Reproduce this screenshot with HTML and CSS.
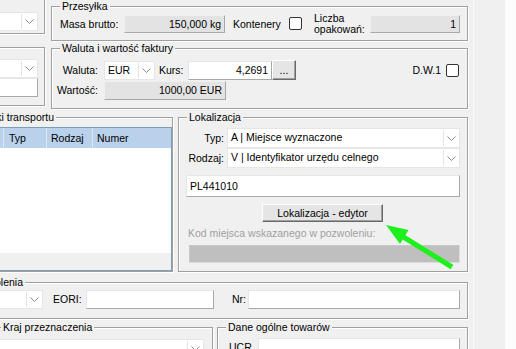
FILE: index.html
```html
<!DOCTYPE html>
<html lang="pl">
<head>
<meta charset="utf-8">
<title>Zgłoszenie</title>
<link rel="stylesheet" href="styles.css">
</head>
<body>
<div class="window">
  <div class="main">
    <div class="row1">
      <div class="lcol">
        <div class="gb box1">
          <div class="combo"><span class="ct"></span><span class="dd"><svg class="chev" width="9" height="5" viewBox="0 0 9 5"><path d="M0.5 0.5 L4.5 4.5 L8.5 0.5"/></svg></span></div>
        </div>
        <div class="gb box2">
          <div class="combo"><span class="ct"></span><span class="dd"><svg class="chev" width="9" height="5" viewBox="0 0 9 5"><path d="M0.5 0.5 L4.5 4.5 L8.5 0.5"/></svg></span></div>
          <div class="tb"></div>
        </div>
      </div>
      <div class="rcol">
        <div class="gb przes">
          <span class="lg">Przesyłka</span>
          <span class="lbl l-masa">Masa brutto:</span>
          <div class="ro f-masa">150,000 kg</div>
          <span class="lbl l-kont">Kontenery</span>
          <span class="chk"></span>
          <span class="lbl l-licz">Liczba<br>opakowań:</span>
          <div class="ro f-licz">1</div>
        </div>
        <div class="gb waluta">
          <span class="lg">Waluta i wartość faktury</span>
          <div class="wrow">
            <span class="lbl rl">Waluta:</span>
            <div class="combo c-eur"><span class="ct">EUR</span><span class="dd"><svg class="chev" width="9" height="5" viewBox="0 0 9 5"><path d="M0.5 0.5 L4.5 4.5 L8.5 0.5"/></svg></span></div>
            <span class="lbl l-kurs">Kurs:</span>
            <div class="tb num f-kurs">4,2691</div>
            <div class="btn b-dots">...</div>
            <span class="lbl l-dw">D.W.1</span>
            <span class="chk"></span>
          </div>
          <div class="wrow">
            <span class="lbl rl">Wartość:</span>
            <div class="ro f-wart">1000,00 EUR</div>
          </div>
        </div>
      </div>
    </div>

    <div class="row2">
      <div class="gb transport">
        <span class="lg lg-trans">Środki transportu</span>
        <div class="lv">
          <div class="lvh">
            <span class="hc hc0"></span>
            <span class="hc hc1">Typ</span>
            <span class="hc hc2">Rodzaj</span>
            <span class="hc hc3">Numer</span>
          </div>
          <div class="lvb"></div>
          <div class="lvf"></div>
        </div>
      </div>
      <div class="gb lok">
        <span class="lg">Lokalizacja</span>
        <div class="lrow">
          <span class="lbl ll">Typ:</span>
          <div class="combo grow"><span class="ct">A | Miejsce wyznaczone</span><span class="dd"><svg class="chev" width="9" height="5" viewBox="0 0 9 5"><path d="M0.5 0.5 L4.5 4.5 L8.5 0.5"/></svg></span></div>
        </div>
        <div class="lrow">
          <span class="lbl ll">Rodzaj:</span>
          <div class="combo grow"><span class="ct">V | Identyfikator urzędu celnego</span><span class="dd"><svg class="chev" width="9" height="5" viewBox="0 0 9 5"><path d="M0.5 0.5 L4.5 4.5 L8.5 0.5"/></svg></span></div>
        </div>
        <div class="tb f-pl">PL441010</div>
        <div class="btn b-edit">Lokalizacja - edytor</div>
        <div class="dis-lbl">Kod miejsca wskazanego w pozwoleniu:</div>
        <div class="dis-field"></div>
      </div>
    </div>

    <div class="gb row3">
      <span class="lg lg-poz">Dane pozwolenia</span>
      <div class="combo c-poz"><span class="ct"></span><span class="dd"><svg class="chev" width="9" height="5" viewBox="0 0 9 5"><path d="M0.5 0.5 L4.5 4.5 L8.5 0.5"/></svg></span></div>
      <span class="lbl l-eori">EORI:</span>
      <div class="tb f-eori"></div>
      <span class="lbl l-nr">Nr:</span>
      <div class="tb grow"></div>
    </div>

    <div class="row4">
      <div class="gb kraj">
        <span class="lg">Kraj przeznaczenia</span>
        <div class="combo"><span class="ct"></span><span class="dd"><svg class="chev" width="9" height="5" viewBox="0 0 9 5"><path d="M0.5 0.5 L4.5 4.5 L8.5 0.5"/></svg></span></div>
      </div>
      <div class="gb dane">
        <span class="lg">Dane ogólne towarów</span>
        <span class="lbl l-ucr">UCR</span>
        <div class="tb grow"></div>
      </div>
    </div>
  </div>
  <div class="side"></div>
  <div class="edge"></div>

  <svg class="arrow" width="80" height="52" viewBox="0 0 80 52">
    <line x1="21" y1="15.5" x2="72" y2="47" stroke="#1ef01e" stroke-width="5"/>
    <polygon points="6,5 28.5,10 20,24" fill="#1ef01e"/>
  </svg>
</div>
</body>
</html>
```

FILE: styles.css
```css
* { box-sizing: border-box; }

body {
  margin: 0;
  font-family: "Liberation Sans", Arial, sans-serif;
  font-size: 10.5px;
  color: #000;
  background: #f0f0f0;
}

.window {
  position: relative;
  display: flex;
  width: 516px;
  height: 349px;
  overflow: hidden;
  background: #f0f0f0;
}

.main { width: 473px; flex: none; }
.side { width: 32px; flex: none; border-left: 1px solid #f9f9f9; }
.edge { flex: 1; background: #fcfcfc; }

/* group box (etched) */
.gb {
  position: relative;
  border: 1px solid #a0a0a0;
  box-shadow: inset 1px 1px 0 #fff, 1px 1px 0 #fff;
}
.lg {
  position: absolute;
  top: -7px;
  left: 8px;
  padding: 0 2px;
  background: #f0f0f0;
  line-height: 13px;
  white-space: nowrap;
}
.lg-trans { left: auto; right: 116px; }
.lg-poz { left: auto; right: 442px; }

.lbl { white-space: nowrap; flex: none; }

/* controls */
.combo {
  display: flex;
  height: 19px;
  background: #fff;
  border: 1px solid #e6e6e6;
}
.combo .ct {
  flex: 1;
  padding-left: 3px;
  line-height: 17px;
  white-space: nowrap;
  overflow: hidden;
}
.dd {
  width: 16px;
  flex: none;
  display: flex;
  align-items: center;
  justify-content: center;
  border-left: 1px solid #e3e3e3;
  margin: 1px 0;
}
.chev path { fill: none; stroke: #8a8a8a; stroke-width: 1; }

.tb, .ro {
  display: flex;
  align-items: center;
  height: 19px;
  padding: 0 3px;
  border: 1px solid;
  border-color: #e6e6e6 #a8a8a8 #a8a8a8 #e6e6e6;
  background: #fff;
  white-space: nowrap;
}
.ro { background: #e3e3e3; justify-content: flex-end; border-color: #f0f0f0 #a8a8a8 #a8a8a8 #f0f0f0; }
.num { justify-content: flex-end; }

.btn {
  display: flex;
  align-items: center;
  justify-content: center;
  background: #e5e5e5;
  border: 1px solid;
  border-color: #fff #696969 #696969 #fff;
  box-shadow: inset -1px -1px 0 #a0a0a0;
  white-space: nowrap;
}

.chk {
  width: 13px;
  height: 13px;
  flex: none;
  background: #fff;
  border: 1px solid #333;
  border-radius: 2px;
}

.grow { flex: 1; }

/* row 1 */
.row1 {
  display: flex;
  align-items: flex-start;
  margin-left: -10px;
  height: 109px;
}
.lcol { width: 55px; flex: none; margin-right: 6px; }
.box1 { height: 54px; margin-top: -20px; padding: 31px 6px 0 0; }
.box2 { height: 59px; margin-top: 13px; padding: 11px 6px 0 0; }

.rcol { width: 417px; flex: none; }
.przes {
  height: 35px;
  margin-top: 6px;
  display: flex;
  align-items: center;
  padding: 0 7px 0 8px;
}
.l-masa { width: 64px; }
.f-masa { width: 101px; height: 18px; }
.l-kont { width: 56px; margin-left: 8px; }
.l-licz { width: 56px; margin-left: 12px; line-height: 11px; }
.f-licz { width: 90px; height: 18px; }

.waluta { height: 61px; margin-top: 7px; padding: 11px 8px 0 0; }
.wrow { display: flex; align-items: center; height: 20px; }
.rl { width: 52px; text-align: right; padding-right: 6px; }
.c-eur { width: 51px; }
.l-kurs { width: 29px; margin-left: 4px; }
.f-kurs { width: 84px; }
.b-dots { width: 24px; height: 20px; }
.l-dw { margin-left: auto; margin-right: 5px; }
.f-wart { width: 122px; }

/* row 2 */
.row2 {
  display: flex;
  margin-top: 8px;
  margin-left: -20px;
  height: 155px;
}
.transport {
  width: 193px;
  flex: none;
  margin-right: 5px;
  padding-top: 9px;
  display: flex;
}
.lv {
  flex: 1;
  display: flex;
  flex-direction: column;
  border: 1px solid #7f9db9;
}
.lvh { display: flex; height: 20px; background: #b9d1ea; }
.hc {
  flex: none;
  line-height: 20px;
  padding-left: 4px;
  border-right: 1px solid #dce7f3;
  white-space: nowrap;
}
.hc0 { width: 22px; }
.hc1 { width: 43px; padding-left: 5px; }
.hc2 { width: 46px; }
.hc3 { flex: 1; border-right: 0; }
.lvb { flex: 1; background: #fff; }
.lvf { height: 17px; background: #f0f0f0; }

.lok { width: 290px; flex: none; padding: 10px 7px 0 0; }
.lrow { display: flex; align-items: center; height: 20px; }
.lrow .combo { height: 20px; }
.ll { width: 48px; text-align: right; padding-right: 3px; }
.f-pl { height: 22px; margin: 7px 0 0 7px; }
.b-edit { width: 121px; height: 18px; margin: 7px 0 0 83px; }
.dis-lbl { margin: 5px 0 0 9px; line-height: 13px; color: #a0a0a0; white-space: nowrap; }
.dis-field {
  height: 18px;
  margin: 5px 0 0 10px;
  background: #bfbfbf;
  border: 1px solid;
  border-color: #c8c8c8 #dcdcdc #dcdcdc #c8c8c8;
}

/* row 3 */
.row3 {
  display: flex;
  align-items: flex-start;
  width: 488px;
  height: 37px;
  margin-top: 10px;
  margin-left: -20px;
  padding: 7px 7px 0 0;
}
.row3 .lbl { line-height: 19px; }
.c-poz { width: 62px; }
.l-eori { width: 33px; margin-left: 10px; }
.f-eori { width: 128px; }
.l-nr { width: 16px; margin-left: 18px; }

/* row 4 */
.row4 { display: flex; margin-top: 8px; margin-left: -8px; }
.kraj { width: 221px; height: 40px; margin-right: 4px; padding: 11px 8px 0 0; }
.dane { width: 251px; height: 40px; padding: 10px 7px 0 11px; display: flex; align-items: flex-start; }
.l-ucr { width: 29px; line-height: 19px; }

/* annotation overlay */
.arrow {
  position: absolute;
  left: 380px;
  top: 220px;
  pointer-events: none;
}
```
